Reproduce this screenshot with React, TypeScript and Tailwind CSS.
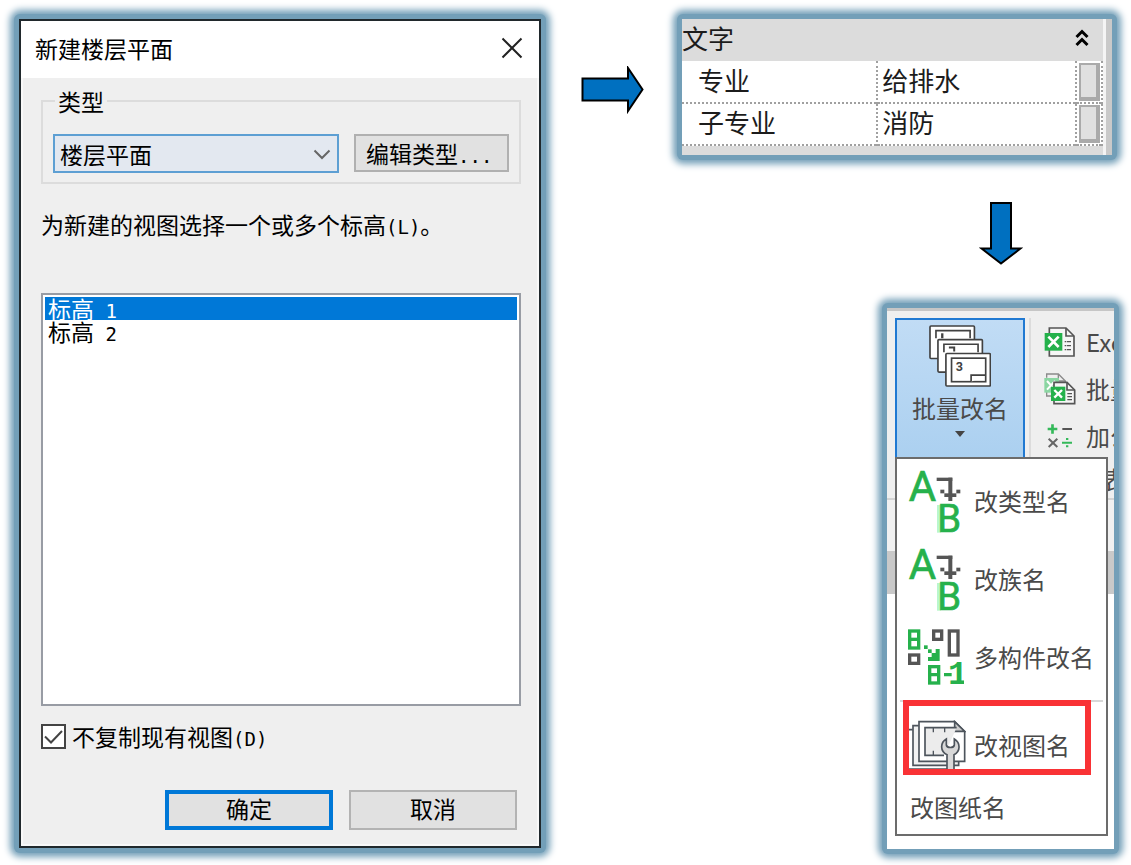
import { useState } from "react";
import type { ReactNode } from "react";

interface FrameProps {
    className?: string;
    children: ReactNode;
}

function Frame({ className = "", children }: FrameProps) {
    return (
        <div className={`rounded-md bg-[#739fb8] p-[5px] shadow-[0_0_7px_4px_#739fb8] ${className}`}>
            {children}
        </div>
    );
}

/* Latin text sits on half-width cells next to the Chinese text */
function Half({ children }: { children: ReactNode }) {
    return <span className="font-['DejaVu_Sans_Mono',monospace] text-[19px] leading-none">{children}</span>;
}

function ArrowRight() {
    return (
        <svg className="mt-[52px] h-[48px] w-[63px] shrink-0" viewBox="0 0 63 48">
            <path d="M1.500 12.500H47V2L61.500 23.500 47 45V34.500H1.500Z" fill="#0070c0" stroke="#000" strokeWidth="2" />
        </svg>
    );
}

function ArrowDown() {
    return (
        <svg className="mt-[42px] h-[63px] w-[44px]" viewBox="0 0 44 63">
            <path d="M12 1H32V46.500H41.500L22 61.500 2.500 46.500H12Z" fill="#0070c0" stroke="#000" strokeWidth="2" />
        </svg>
    );
}

function SheetsIcon() {
    return (
        <svg className="h-[62px] w-[62px]" viewBox="180 105 187 187" fill="#fff" stroke="#414141" strokeWidth="5">
            <rect x="183" y="108" width="134" height="98" rx="3" />
            <path d="M201 145V122H304V145" />
            <path d="M220 130V145" strokeWidth="7" />
            <rect x="207" y="149" width="134" height="98" rx="3" />
            <path d="M225 187V163H328V187" />
            <path d="M240 173H256V185" strokeWidth="6" />
            <rect x="231" y="191" width="134" height="98" rx="3" />
            <rect x="248" y="205" width="103" height="71" />
            <path d="M307 276V256H351" />
            <text x="261" y="243" fontSize="38" fontWeight="700" fill="#414141" stroke="none" fontFamily="Roboto, sans-serif">3</text>
        </svg>
    );
}

function ExcelIcon() {
    return (
        <svg className="h-[32px] w-[32px]" viewBox="522 109 96 96" fill="none" stroke="#555" strokeWidth="5">
            <path d="M538 115H588L612 139V199H538Z" fill="#f6f6f6" />
            <path d="M588 115V139H612" />
            <path d="M584 156H603M584 168H603M584 180H603" strokeWidth="4" strokeDasharray="5 2 12" />
            <rect x="524" y="130" width="53" height="53" fill="#24b14b" stroke="none" />
            <path d="M535 141L566 172M566 141L535 172" stroke="#fff" strokeWidth="8" />
        </svg>
    );
}

function BatchExcelIcon() {
    return (
        <svg className="h-[32px] w-[32px]" viewBox="524 248 96 96" fill="none" stroke="#555" strokeWidth="5">
            <path d="M532 262V251H567L588 272V280M532 305V317H548" stroke="#8a8a8a" strokeWidth="4" />
            <path d="M567 251V272H588" stroke="#8a8a8a" strokeWidth="4" />
            <rect x="525" y="263" width="44" height="44" fill="#8bd6a2" stroke="none" />
            <path d="M533 272L557 298M557 272L533 298" stroke="#fff" strokeWidth="6" />
            <path d="M554 276H593L616 299V340H554Z" fill="#f6f6f6" />
            <path d="M593 276V299H616" />
            <path d="M594 310H608M594 319H608M594 328H608" strokeWidth="4" />
            <rect x="545" y="289" width="43" height="43" fill="#24b14b" stroke="none" />
            <path d="M555 299L578 322M578 299L555 322" stroke="#fff" strokeWidth="7" />
        </svg>
    );
}

function MathIcon() {
    return (
        <svg className="h-[32px] w-[32px]" viewBox="524 389 96 96" fill="none" strokeWidth="6">
            <path d="M535 416H564M549.500 402V430" stroke="#35b95a" strokeWidth="8" />
            <path d="M579 416H608" stroke="#555" />
            <path d="M538 445L564 470M564 445L538 470" stroke="#666" />
            <path d="M578 457H608M590 446H597M590 468H597" stroke="#35b95a" />
        </svg>
    );
}

function RenameIcon() {
    return (
        <svg className="h-[65px] w-[54px]" viewBox="114 54 162 195">
            <text x="116" y="149" fontSize="126" fill="#26b14c" stroke="#26b14c" strokeWidth="2" fontFamily="Roboto, sans-serif">A</text>
            <rect x="201" y="162" width="12" height="83" fill="#b9f7cc" />
            <text x="202" y="244" fontSize="115" fill="#26b14c" stroke="#26b14c" strokeWidth="2" fontFamily="Roboto, sans-serif">B</text>
            <g fill="#555">
                <rect x="200" y="80" width="47" height="10" />
                <rect x="235" y="80" width="12" height="70" />
                <rect x="211" y="116" width="12" height="11" />
                <rect x="223" y="127" width="36" height="11" />
                <rect x="259" y="116" width="12" height="11" />
            </g>
        </svg>
    );
}

function MultiRenameIcon() {
    return (
        <svg className="h-[56px] w-[56px]" viewBox="116 57 168 168" fill="none" strokeWidth="10">
            <g stroke="#26b14c">
                <rect x="121" y="63" width="27" height="51" />
                <path d="M121 88H148" />
                <rect x="181" y="170" width="27" height="49" />
                <path d="M181 194H208M224 194H247" />
            </g>
            <g fill="#26b14c">
                <rect x="164" y="106" width="11" height="11" />
                <rect x="176" y="118" width="11" height="11" />
                <path d="M187 129H199V117H211V153H176V141H187Z" />
            </g>
            <g stroke="#555">
                <rect x="193" y="63" width="24" height="25" />
                <rect x="240" y="63" width="26" height="72" />
                <rect x="121" y="135" width="27" height="25" />
            </g>
            <text x="236" y="223" fontSize="100" fontWeight="700" fill="#26b14c" fontFamily="'Liberation Mono', monospace">1</text>
        </svg>
    );
}

function ViewRenameIcon() {
    return (
        <svg className="h-[50px] w-[58px]" viewBox="116 326 174 150" fill="none" stroke="#4d545c" strokeWidth="5">
            <path d="M116 355H130M116 473H250" />
            <path d="M148 343H131V462H268V451" fill="#f2f2f2" />
            <path d="M149 331H256L286 361V450H149Z" fill="#fff" />
            <path d="M256 331V360H286Z" fill="#ccc" />
            <path d="M262 349H167V432H224" fill="#ececec" />
            <path d="M192 349V363M226 349V363M192 432V418" strokeWidth="4" />
            <path
                d="M233 480V430C212 421 212 394 231 383V401C233 411 253 411 255 401V383C274 394 274 421 254 430V480Z"
                fill="#d8d8d8"
            />
        </svg>
    );
}

const LEVELS = ["1", "2"];

function PlanDialog() {
    const [selected, setSelected] = useState("1");

    return (
        <form
            className="flex flex-col border-2 border-[#20282c] bg-[#efefef] text-[23px] leading-6 text-black"
            onSubmit={(e) => e.preventDefault()}
        >
            <header className="flex h-[57px] items-center justify-between bg-white pr-3 pb-1 pl-[14px]">
                <h1>新建楼层平面</h1>
                <button type="button" aria-label="关闭" className="p-1">
                    <svg className="h-[22px] w-[22px]" viewBox="0 0 22 22" fill="none" stroke="#222" strokeWidth="2">
                        <path d="M1.500 1.500L20.500 20.500M20.500 1.500L1.500 20.500" />
                    </svg>
                </button>
            </header>

            <div className="flex flex-col border-2 border-t-0 border-[#f8f8f8] pt-[11px] pr-4 pb-[14px] pl-[18px]">
                <fieldset className="flex min-w-0 gap-[15px] border-2 border-[#dcdcdc] px-[10px] pt-[21px] pb-[9px]">
                    <legend className="ml-[2px] px-[3px]">类型</legend>
                    <div className="relative flex-1">
                        <select
                            aria-label="类型"
                            className="h-[39px] w-full appearance-none border-2 border-[#5d9fd3] bg-[#e3e8f0] pl-[5px]"
                        >
                            <option>楼层平面</option>
                        </select>
                        <svg
                            className="pointer-events-none absolute top-[15px] right-[8px] h-[11px] w-[18px]"
                            viewBox="0 0 18 11"
                            fill="none"
                            stroke="#666"
                            strokeWidth="2"
                        >
                            <path d="M1.500 1.500L9 9 16.500 1.500" />
                        </svg>
                    </div>
                    <button type="button" className="h-[38px] w-[155px] border-2 border-[#b0b0b0] bg-[#e1e1e1] pl-[10px] text-left leading-6">
                        编辑类型<Half>...</Half>
                    </button>
                </fieldset>

                <p id="levels" className="mt-7">
                    为新建的视图选择一个或多个标高<Half>(L)</Half>。
                </p>

                <ul
                    role="listbox"
                    aria-labelledby="levels"
                    className="mt-14 h-[413px] border-2 border-[#989ca4] bg-white p-[2px] leading-[23px]"
                >
                    {LEVELS.map((level) => (
                        <li
                            key={level}
                            role="option"
                            aria-selected={level === selected}
                            onClick={() => setSelected(level)}
                            className={`h-[23px] cursor-default pl-[3px] ${level === selected ? "bg-[#0078d7] text-white" : ""}`}
                        >
                            标高<Half> {level}</Half>
                        </li>
                    ))}
                </ul>

                <label className="mt-[18px] flex items-center gap-[6px]">
                    <span className="relative h-[25px] w-[25px]">
                        <input
                            type="checkbox"
                            defaultChecked
                            className="peer block h-full w-full appearance-none border-2 border-[#444] bg-white"
                        />
                        <svg
                            className="pointer-events-none absolute inset-0 hidden peer-checked:block"
                            viewBox="0 0 25 25"
                            fill="none"
                            stroke="#444"
                            strokeWidth="2"
                        >
                            <path d="M4 12.500L10 18.500 21 7" />
                        </svg>
                    </span>
                    <span>
                        不复制现有视图<Half>(D)</Half>
                    </span>
                </label>

                <div className="mt-[41px] flex justify-end gap-4 pr-1">
                    <button type="submit" className="h-10 w-[168px] border-4 border-[#0078d7] bg-[#e1e1e1] pb-1">
                        确定
                    </button>
                    <button type="button" className="h-10 w-[168px] border-2 border-[#b3b3b3] bg-[#e1e1e1] pb-1">
                        取消
                    </button>
                </div>
            </div>
        </form>
    );
}

const PROPERTIES = [
    { name: "专业", value: "给排水" },
    { name: "子专业", value: "消防" },
];

function PropertyPanel() {
    return (
        <section className="flex bg-[#dcdcdc] text-[26px] leading-8 text-[#1c1c1c]">
            <div className="flex-1 pb-[9px]">
                <header className="flex h-[42px] items-center justify-between pr-[14px] pb-1">
                    <h2>文字</h2>
                    <button type="button" aria-label="折叠">
                        <svg className="h-[18px] w-[14px]" viewBox="0 0 14 18" fill="none" stroke="#000" strokeWidth="3">
                            <path d="M1.500 8L7 2.500 12.500 8M1.500 16L7 10.500 12.500 16" />
                        </svg>
                    </button>
                </header>
                <table className="w-full table-fixed border-collapse bg-white">
                    <tbody>
                        {PROPERTIES.map((property) => (
                            <tr key={property.name} className="h-[42px] border-b-2 border-dotted border-[#a0a0a0]">
                                <th scope="row" className="w-[46.5%] border-r-2 border-dotted border-[#a0a0a0] p-0 pl-4 pb-1 text-left font-normal">
                                    {property.name}
                                </th>
                                <td className="border-r-2 border-dotted border-[#a0a0a0] p-0 pl-1 pb-1">{property.value}</td>
                                <td className="w-[26px] border-r-2 border-dotted border-[#a0a0a0] p-0 pl-[2px]">
                                    <button
                                        type="button"
                                        aria-label={property.name}
                                        className="block h-[38px] w-[21px] border-2 border-r-4 border-b-4 border-[#aaa] bg-[#e0e0e0]"
                                    />
                                </td>
                            </tr>
                        ))}
                    </tbody>
                </table>
            </div>
            <div className="w-[9px] border-l-3 border-[#f4f4f4] bg-[#c9c9c9]" />
        </section>
    );
}

const COMMANDS = [
    { label: "Exc", icon: <ExcelIcon /> },
    { label: "批量", icon: <BatchExcelIcon /> },
    { label: "加公", icon: <MathIcon /> },
];

function RibbonMenu() {
    return (
        <section className="relative h-[541px] overflow-hidden bg-white text-[24px] leading-7 text-[#4a4a4a]">
            <div className="flex h-[192px] overflow-hidden border-t-3 border-b-2 border-t-[#c6c6c6] border-b-[#d4d4d4] bg-[#efefef] pt-[7px] pl-2">
                <button
                    type="button"
                    className="flex h-[142px] w-[130px] shrink-0 flex-col items-center border-2 border-[#2079d2] bg-linear-to-b from-[#c1dcf5] to-[#abd0f0] pt-[5px]"
                >
                    <SheetsIcon />
                    <span className="mt-[7px]">批量改名</span>
                    <svg className="mt-[9px] h-[6px] w-[10px]" viewBox="0 0 10 6" fill="#444">
                        <path d="M0 0H10L5 6Z" />
                    </svg>
                </button>
                <div className="ml-1 w-[2px] shrink-0 bg-[#dcdcdc]" />
                <div className="ml-[13px] shrink-0 whitespace-nowrap">
                    {COMMANDS.map((command) => (
                        <button key={command.label} type="button" className="flex h-[47px] items-center gap-[10px]">
                            {command.icon}
                            <span>{command.label}</span>
                        </button>
                    ))}
                    <button type="button" className="block h-[40px] pl-[58px]">表</button>
                </div>
            </div>
            <div className="h-[51px] bg-[#f1f1f1]" />
            <div className="h-[43px] bg-[#c9c9c9]" />

            <menu className="absolute top-[149px] right-[6px] left-2 border-2 border-[#6c6c6c] bg-white pt-[3px]">
                <li>
                    <button type="button" className="flex h-[78px] w-full items-center gap-3 pl-[11px]">
                        <RenameIcon />
                        改类型名
                    </button>
                </li>
                <li>
                    <button type="button" className="flex h-[78px] w-full items-center gap-3 pl-[11px]">
                        <RenameIcon />
                        改族名
                    </button>
                </li>
                <li>
                    <button type="button" className="flex h-[78px] w-full items-center gap-[10px] pl-[11px]">
                        <MultiRenameIcon />
                        多构件改名
                    </button>
                </li>
                <li className="mx-[3px] mt-1 h-[2px] bg-[#d8d8d8]" />
                <li className="relative mt-1">
                    <button type="button" className="flex h-[78px] w-full items-center gap-2 pl-[11px]">
                        <ViewRenameIcon />
                        改视图名
                    </button>
                    <span className="pointer-events-none absolute -top-[6px] right-[15px] left-[6px] h-[75px] border-6 border-[#f93235]" />
                </li>
                <li>
                    <button type="button" className="flex h-[50px] w-full items-center pb-1 pl-[13px]">
                        改图纸名
                    </button>
                </li>
            </menu>
        </section>
    );
}

export default function App() {
    return (
        <main className="flex items-start bg-white pt-[14px] pr-3 pb-3 pl-[14px] font-['Noto_Sans_CJK_SC',sans-serif]">
            <Frame className="w-full max-w-[532px]">
                <PlanDialog />
            </Frame>
            <div className="ml-[35px] flex flex-1 flex-col">
                <div className="flex items-start gap-[33px] pr-[2px]">
                    <ArrowRight />
                    <Frame className="flex-1">
                        <PropertyPanel />
                    </Frame>
                </div>
                <div className="flex w-[237px] flex-col items-center self-end">
                    <ArrowDown />
                    <Frame className="mt-[38px] w-full">
                        <RibbonMenu />
                    </Frame>
                </div>
            </div>
        </main>
    );
}
